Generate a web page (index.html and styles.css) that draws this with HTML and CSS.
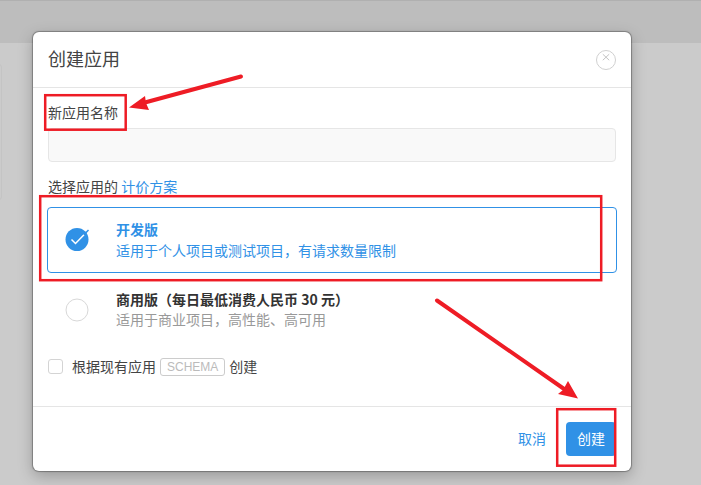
FILE: index.html
```html
<!DOCTYPE html>
<html lang="zh-CN">
<head>
<meta charset="utf-8">
<title>创建应用</title>
<link rel="stylesheet" href="styles.css">
</head>
<body>
<div class="page">
  <div class="topbar"></div>
  <div class="sidecard"></div>
  <div class="modal">
    <header class="modal-head">
      <h2 class="modal-title">创建应用</h2>
      <span class="close">
        <svg width="20" height="20" viewBox="0 0 20 20"><circle cx="10" cy="10" r="9.5" fill="none" stroke="#d0d0d0"/><path d="M6.8 4.2 L13.2 10.2 M13.2 4.2 L6.8 10.2" stroke="#c4c4c4" stroke-width="1" fill="none"/></svg>
      </span>
    </header>
    <div class="modal-body">
      <label class="label">新应用名称</label>
      <div class="input"></div>
      <div class="label pick">选择应用的 <a class="link">计价方案</a></div>
      <div class="option selected">
        <svg class="radio" width="26" height="26" viewBox="0 0 26 26"><circle cx="12" cy="12.5" r="11.5" fill="#3091e6"/><path d="M6.5 12.5 L10.5 16.5 L19 7.8" stroke="#fff" stroke-width="1.5" fill="none"/><path d="M19 7.8 L23.5 3" stroke="#3091e6" stroke-width="1.5" fill="none"/></svg>
        <div class="option-text">
          <div class="option-name">开发版</div>
          <div class="option-desc">适用于个人项目或测试项目，有请求数量限制</div>
        </div>
      </div>
      <div class="option second">
        <svg class="radio" width="26" height="26" viewBox="0 0 26 26"><circle cx="12" cy="13" r="11" fill="#fff" stroke="#d8d8d8"/></svg>
        <div class="option-text">
          <div class="option-name">商用版（每日最低消费人民币 30 元）</div>
          <div class="option-desc">适用于商业项目，高性能、高可用</div>
        </div>
      </div>
      <div class="schema-row">
        <span class="checkbox"></span>
        <span>根据现有应用</span>
        <span class="tag">SCHEMA</span>
        <span>创建</span>
      </div>
    </div>
    <footer class="modal-foot">
      <a class="link cancel">取消</a>
      <button class="btn">创建</button>
    </footer>
  </div>
  <svg class="marks" width="701" height="485" viewBox="0 0 701 485">
    <g fill="none" stroke="#ee1c25" stroke-width="2.5">
      <rect x="45.2" y="95.2" width="80.5" height="34.5"/>
      <rect x="40.2" y="196.2" width="561" height="84"/>
      <rect x="557.2" y="409.2" width="58" height="56.5"/>
    </g>
    <g stroke="#ee1c25" stroke-width="4" stroke-linecap="round" fill="none">
      <path d="M241 76.5 L143 103"/>
      <path d="M437 300.5 L567 391"/>
    </g>
    <g fill="#ee1c25">
      <path d="M129 107.5 L145 96 L146 103 L149 110 Z"/>
      <path d="M578 398.5 L568 381 L563 390 L558 394 Z"/>
    </g>
  </svg>
</div>
</body>
</html>
```
FILE: styles.css
```css
* { box-sizing: border-box; }
html, body { margin: 0; padding: 0; }
body {
  font-family: "Noto Sans CJK SC", "Liberation Sans", sans-serif;
  font-size: 14px;
  color: #333;
}
.page {
  position: relative;
  width: 701px;
  height: 485px;
  overflow: hidden;
  background: #cbcbcb;
}
.topbar {
  height: 43px;
  background: #bdbdbd;
  border-top: 1px solid #b0b0b0;
}
.sidecard {
  position: absolute;
  left: -6px;
  top: 64px;
  width: 8px;
  height: 136px;
  border: 1px solid #c4c4c4;
  border-radius: 3px;
}
.modal {
  position: absolute;
  left: 33px;
  top: 32px;
  width: 598px;
  height: 439px;
  display: flex;
  flex-direction: column;
  background: #fff;
  border-radius: 6px;
  box-shadow: 0 0 1px 1px rgba(0,0,0,.3), 0 5px 15px rgba(0,0,0,.25);
}
.modal-head {
  height: 56px;
  flex: none;
  display: flex;
  align-items: center;
  justify-content: space-between;
  padding: 0 15px;
  border-bottom: 1px solid #e5e5e5;
}
.modal-title {
  margin: 0 0 4px;
  font-size: 18px;
  font-weight: 400;
  line-height: 24px;
  color: #444;
}
.close { display: flex; margin-top: 1px; }
.modal-body {
  flex: 1;
  padding: 14px 15px 0;
}
.label {
  display: block;
  height: 20px;
  line-height: 20px;
  color: #444;
}
.input {
  margin-top: 6px;
  height: 34px;
  background: #f9f9f9;
  border: 1px solid #e6e6e6;
  border-radius: 4px;
}
.pick { margin-top: 14px; }
.link { color: #3091e6; text-decoration: none; }
.option {
  display: flex;
  align-items: center;
  height: 66px;
  margin: 0 -1px;
  padding: 0 0 0 17px;
  border: 1px solid transparent;
  border-radius: 4px;
}
.selected {
  margin-top: 11px;
  border-color: #3091e6;
  color: #3091e6;
}
.second { margin-top: 4px; }
.radio { flex: none; }
.option-text { margin-left: 25px; line-height: 20px; margin-top: -1px; }
.second .option-text { margin-top: -3px; }
.option-name { font-weight: 700; font-size: 14px; color: #333; }
.option-desc { color: #999; font-size: 14px; margin-top: 1px; }
.second .option-desc { margin-top: 0; }
.selected .option-name, .selected .option-desc { color: #3091e6; }
.schema-row {
  display: flex;
  align-items: center;
  gap: 4px;
  margin-top: 13px;
  height: 20px;
  line-height: 20px;
  color: #444;
}
.checkbox {
  width: 15px;
  height: 15px;
  margin-right: 5px;
  background: #fff;
  border: 1px solid #d4d4d4;
  border-radius: 3px;
}
.tag {
  height: 18px;
  margin-top: 2px;
  padding: 0 6px;
  font-family: "Liberation Sans", sans-serif;
  font-size: 12px;
  line-height: 16px;
  color: #bbb;
  border: 1px solid #ccc;
  border-radius: 3px;
}
.modal-foot {
  height: 65px;
  flex: none;
  display: flex;
  align-items: center;
  justify-content: flex-end;
  gap: 20px;
  padding: 0 15px;
  border-top: 1px solid #e5e5e5;
}
.cancel { padding-bottom: 2px; }
.btn {
  width: 50px;
  height: 34px;
  padding: 0 0 2px;
  font: inherit;
  color: #fff;
  background: #3091e6;
  border: 0;
  border-radius: 4px;
}
.marks {
  position: absolute;
  left: 0;
  top: 0;
  pointer-events: none;
}
```
